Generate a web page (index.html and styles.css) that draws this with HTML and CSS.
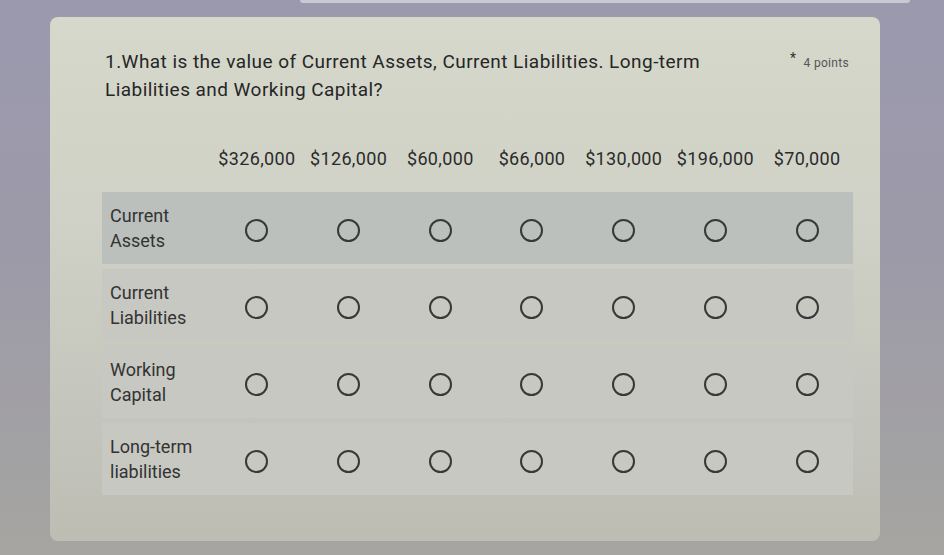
FILE: index.html
```html
<!DOCTYPE html>
<html lang="en">
<head>
<meta charset="utf-8">
<title>Grid question</title>
<link rel="stylesheet" href="styles.css">
</head>
<body>
<div class="prev-card"></div>
<div class="card">
  <div class="q-head">
    <div class="q-title">1.What is the value of Current Assets, Current Liabilities. Long-term Liabilities and Working Capital?</div>
    <div class="q-points"><span class="req">*</span> 4 points</div>
  </div>
  <div class="grid">
    <div class="hdr">
      <div class="lbl"></div>
      <div class="col">$326,000</div>
      <div class="col">$126,000</div>
      <div class="col">$60,000</div>
      <div class="col">$66,000</div>
      <div class="col">$130,000</div>
      <div class="col">$196,000</div>
      <div class="col">$70,000</div>
    </div>
    <div class="row first">
      <div class="lbl">Current<br>Assets</div>
      <div class="cell"><span class="radio"></span></div>
      <div class="cell"><span class="radio"></span></div>
      <div class="cell"><span class="radio"></span></div>
      <div class="cell"><span class="radio"></span></div>
      <div class="cell"><span class="radio"></span></div>
      <div class="cell"><span class="radio"></span></div>
      <div class="cell"><span class="radio"></span></div>
    </div>
    <div class="row">
      <div class="lbl">Current<br>Liabilities</div>
      <div class="cell"><span class="radio"></span></div>
      <div class="cell"><span class="radio"></span></div>
      <div class="cell"><span class="radio"></span></div>
      <div class="cell"><span class="radio"></span></div>
      <div class="cell"><span class="radio"></span></div>
      <div class="cell"><span class="radio"></span></div>
      <div class="cell"><span class="radio"></span></div>
    </div>
    <div class="row">
      <div class="lbl">Working<br>Capital</div>
      <div class="cell"><span class="radio"></span></div>
      <div class="cell"><span class="radio"></span></div>
      <div class="cell"><span class="radio"></span></div>
      <div class="cell"><span class="radio"></span></div>
      <div class="cell"><span class="radio"></span></div>
      <div class="cell"><span class="radio"></span></div>
      <div class="cell"><span class="radio"></span></div>
    </div>
    <div class="row">
      <div class="lbl">Long-term<br>liabilities</div>
      <div class="cell"><span class="radio"></span></div>
      <div class="cell"><span class="radio"></span></div>
      <div class="cell"><span class="radio"></span></div>
      <div class="cell"><span class="radio"></span></div>
      <div class="cell"><span class="radio"></span></div>
      <div class="cell"><span class="radio"></span></div>
      <div class="cell"><span class="radio"></span></div>
    </div>
  </div>
</div>
</body>
</html>
```

FILE: styles.css
```css
* { box-sizing: border-box; }
html, body { height: 100%; }
body {
  margin: 0;
  width: 944px;
  height: 555px;
  overflow: hidden;
  background: linear-gradient(to bottom, #9b99ae 0%, #9c9aa8 45%, #a6a5a1 100%);
  font-family: Roboto, "Noto Sans", "Liberation Sans", sans-serif;
  color: #2a2a2a;
  display: flex;
  flex-direction: column;
  align-items: flex-start;
}
.prev-card {
  margin-left: 300px;
  width: 610px;
  height: 3px;
  background: #c9c9d2;
  border-radius: 0 0 6px 6px;
  flex: none;
}
.card {
  margin-top: 14px;
  margin-left: 50px;
  width: 830px;
  height: 524px;
  flex: none;
  border-radius: 8px;
  background: linear-gradient(to bottom, #d6d8cb 0%, #cfd1c6 40%, #c4c5bc 75%, #bdbdb4 100%);
  padding: 31px 27px 0 52px;
}
.q-head {
  display: flex;
  align-items: flex-start;
  justify-content: space-between;
  padding-left: 3px;
}
.q-title {
  width: 620px;
  font-size: 19px;
  letter-spacing: 0.45px;
  line-height: 28px;
  color: #262626;
}
.q-points {
  font-size: 12px;
  letter-spacing: 0.3px;
  line-height: 14px;
  color: #555;
  margin-top: 7px;
  margin-right: 4px;
}
.req {
  font-size: 14px;
  color: #333;
  position: relative;
  top: -4px;
  margin-right: 4px;
}
.grid {
  margin-top: 34px;
  width: 751px;
  display: flex;
  flex-direction: column;
  gap: 5px;
}
.hdr, .row {
  display: grid;
  grid-template-columns: 109px repeat(7, 1fr);
  align-items: center;
}
.hdr {
  height: 40px;
  margin-bottom: 9px;
}
.col {
  text-align: center;
  font-size: 18px;
  letter-spacing: 0.35px;
  color: #2b2b2b;
  white-space: nowrap;
}
.row {
  height: 72px;
  background: #c6c8c1;
}
.row.first { background: #bcc0bd; }
.lbl {
  padding-left: 8px;
  font-size: 18px;
  line-height: 25px;
  color: #333;
}
.cell {
  display: flex;
  justify-content: center;
  align-items: center;
}
.radio {
  width: 23px;
  height: 23px;
  border: 2.5px solid #383838;
  border-radius: 50%;
  display: block;
  margin-top: 4px;
}
```
